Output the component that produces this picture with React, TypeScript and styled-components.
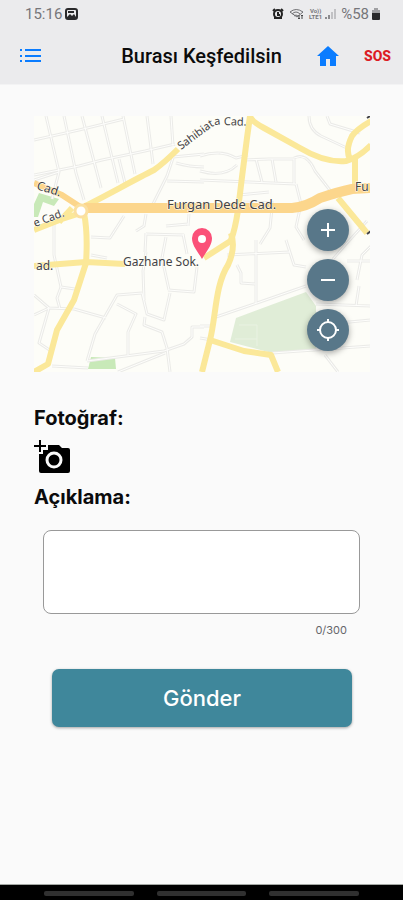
import React, { useState } from "react";
import styled, { createGlobalStyle } from "styled-components";

const GlobalStyle = createGlobalStyle`
  *, *::before, *::after { box-sizing: border-box; }
  body { margin: 0; background: #fafafa; }
  button, textarea { font: inherit; color: inherit; }
`;

const Screen = styled.div`
  min-height: 100vh;
  display: flex;
  flex-direction: column;
  background: #fafafa;
  color: #0b0b0c;
  font-family: Roboto, sans-serif;
`;

const TopArea = styled.div`
  background: #ebebed;
  border-bottom: 1px solid #f3f3f4;
`;

const StatusBar = styled.div`
  display: flex;
  align-items: center;
  justify-content: space-between;
  height: 28px;
  padding: 0 23px 0 25px;
  color: #76767a;
  font-size: 15px;
  line-height: 28px;
`;

const StatusGroup = styled.div`
  display: flex;
  align-items: center;
  gap: 3px;
`;

const Carrier = styled.span`
  display: flex;
  flex-direction: column;
  font-size: 6px;
  font-weight: 700;
  line-height: 6px;
  text-align: center;
`;

const Toolbar = styled.header`
  display: grid;
  grid-template-columns: 78px 1fr 84px;
  align-items: center;
  height: 56px;
  padding: 0 12px 0 18px;
`;

const Title = styled.h1`
  margin: 0;
  font-size: 20px;
  font-weight: 500;
  line-height: 24px;
  text-align: center;
  white-space: nowrap;
`;

const Actions = styled.div`
  display: flex;
  align-items: center;
  justify-content: flex-end;
  gap: 24px;
`;

const IconButton = styled.button`
  display: flex;
  align-items: center;
  justify-self: start;
  padding: 0;
  border: 0;
  background: none;
  color: #0a7cff;
  cursor: pointer;
`;

const SosButton = styled(IconButton)`
  color: #dc1c24;
  font-family: Roboto, sans-serif;
  font-size: 14px;
  font-weight: 800;
  line-height: 24px;
`;

const Content = styled.main`
  flex: 1;
  padding: 31px 33px 24px 34px;
`;

const MapFrame = styled.section`
  position: relative;
  height: 256px;
  overflow: hidden;
  background: #fdfdf8;
`;

const MapDrawing = styled.svg`
  display: block;
  width: 100%;
  height: 100%;
`;

const MapControls = styled.div`
  position: absolute;
  right: 21px;
  bottom: 21px;
  display: flex;
  flex-direction: column;
  gap: 8px;
`;

const MapButton = styled.button`
  display: flex;
  align-items: center;
  justify-content: center;
  width: 42px;
  height: 42px;
  padding: 0;
  border: 0;
  border-radius: 50%;
  background: #587789;
  color: #fff;
  box-shadow: 0 2px 6px rgba(0, 0, 0, 0.35);
  cursor: pointer;
`;

const Form = styled.form`
  display: flex;
  flex-direction: column;
  align-items: flex-start;
  padding-top: 32px;
  font-family: Inter, sans-serif;
`;

const FieldLabel = styled.label`
  font-size: 20px;
  font-weight: 700;
  line-height: 28px;
`;

const PhotoButton = styled(IconButton)`
  height: 51px;
  padding-bottom: 2px;
  color: #000;
`;

const Field = styled.div`
  align-self: stretch;
  display: flex;
  flex-direction: column;
  padding: 19px 10px 0 9px;
`;

const Description = styled.textarea`
  display: block;
  width: 100%;
  height: 84px;
  padding: 10px 12px;
  border: 1px solid #999;
  border-radius: 8px;
  background: #fff;
  font-size: 16px;
  line-height: 20px;
  resize: none;
`;

const Counter = styled.output`
  align-self: flex-end;
  padding: 8px 13px 0 0;
  color: #66666a;
  font-size: 11px;
  line-height: 16px;
`;

const SubmitButton = styled.button`
  align-self: stretch;
  height: 58px;
  margin: 31px 18px 0;
  border: 0;
  border-radius: 7px;
  background: #3f879b;
  color: #fff;
  font-size: 22px;
  font-weight: 500;
  box-shadow: 0 1px 3px rgba(0, 0, 0, 0.35);
  cursor: pointer;
`;

const NavBar = styled.footer`
  display: flex;
  justify-content: center;
  gap: 23px;
  height: 16px;
  padding: 6px 44px 0;
  border-top: 1px solid #a4a8a4;
  background: #000;
`;

const NavHandle = styled.span`
  flex: 1;
  max-width: 90px;
  height: 5px;
  border-radius: 2px;
  background: #303030;
`;

const minorRoads = [
  "M12 0L25 56M30 0L42 57 50 84M48 0L67 72M68 0L84 67M89 0L101 58M113 0L119 48M137 0L139 30",
  "M0 24L45 14 90 3M0 59L45 50 68 44 111 35 141 28M18 83L25 56 0 64M85 43L92 71",
  "M142 33L133 60 119 88M139 41L170 38M133 65L170 66M142 47Q155 51 170 51",
  "M166 40Q187 33 202 42L214 39M166 55Q190 62 203 49M166 64L262 68M210 44L235 43 260 43V68M222 43L228 66M238 43L242 66",
  "M260 42Q273 36 281 55L302 82M275 0Q275 14 287 20L315 33M293 0L296 8 326 17",
  "M262 68L267 88 262 111 270 124M205 79L235 76M209 86L240 87M238 92L236 112 226 128",
  "M20 101V139L27 171M57 121L76 122 90 100M57 139L73 142M102 115L110 110 112 98M112 117L111 136M112 118L150 119M132 110L154 108M155 98L154 110",
  "M27 171L23 182 26 193M27 171L41 173M112 136L109 155 110 184M132 121L128 142 135 174M149 118L153 138",
  "M53 245L61 218 83 179 108 177M40 193L72 202M0 199L15 192 40 193M0 179L15 192 5 227 17 235",
  "M108 177L113 198 130 204 136 177M83 188L102 198 94 216V239M111 201L110 209 128 216 133 232 136 256",
  "M53 245L130 235 150 228 158 221 158 211 170 211M84 256L131 237",
  "M18 250L54 252M134 174L160 176 163 151",
  "M203 149L207 157V167L221 168M222 124V187M193 139L256 136M182 201L223 187 272 170",
  "M252 124L260 149 272 151M299 143L313 127 333 105M313 145L337 145M323 164L328 139 337 130",
  "M282 188L337 190M322 190L325 170M305 207L337 204M238 237L337 230M291 239L304 256M166 210L179 210M166 222L178 224",
];

const yellowRoads = [
  "M49 91C68 82 96 66 120 54Q130 47 144 33",
  "M216 0Q217 5 230 12L266 32Q291 47 312 45 324 42 337 29",
  "M216 0L213 22 208 61 204 94Q201 114 197 124",
  "M197 117Q202 132 194 149C181 169 182 201 176 224L168 256",
  "M198 124L170 142",
  "M337 5Q323 13 318 20 311 34 316 43",
  "M321 43V74M304 82L333 117",
  "M176 224L210 235 237 239 244 256",
  "M0 114L28 103 50 96M25 106L38 92",
  "M50 97Q54 117 52 147L40 184 23 214 14 248 0 256",
  "M0 150L52 146 91 148",
];

const StreetMap = () => (
  <MapDrawing viewBox="0 0 336 256" preserveAspectRatio="xMidYMid slice" role="img" aria-label="Harita">
    <path fill="#e0edd7" d="M202 202L272 176 282 190V235L238 237 196 226Z" />
    <path fill="none" stroke="#e9f2e2" d="M205 209H223V230M201 223H223" />
    <path fill="#c8e9b8" d="M57 241L81 242 82 253 54 253ZM5 77L25 83 20 90 9 86 4 101H0V88Z" />
    <g fill="none" stroke="#ebebe8" strokeWidth="3" strokeLinejoin="round">
      {minorRoads.map((d) => <path key={d} d={d} />)}
    </g>
    <g fill="none" stroke="#fefefc" strokeWidth="1" strokeLinejoin="round">
      {minorRoads.map((d) => <path key={d} d={d} />)}
    </g>
    <g fill="none" stroke="#fbe899" strokeWidth="6" strokeLinejoin="round">
      {yellowRoads.map((d) => <path key={d} d={d} />)}
    </g>
    <g fill="none" stroke="#fcd68c" strokeLinejoin="round">
      <path strokeWidth="10" d="M50 92H258Q272 91 286 82 304 76 318 73L336 72" />
      <path strokeWidth="6" d="M0 67L28 79 48 92" />
    </g>
    <circle cx="47" cy="95" r="6" fill="#fff" stroke="#fbe0a0" strokeWidth="3" />
    <defs>
      <path id="street-north" d="M147 34L178 11Q182 8 190 9L224 10" />
      <path id="street-west" d="M2 73L40 85" />
      <path id="street-southwest" d="M1 111L42 96" />
    </defs>
    <g
      fill="#424246"
      stroke="#fffef5"
      strokeWidth="1"
      paintOrder="stroke"
      fontFamily="Noto Sans, sans-serif"
      fontSize="12"
    >
      <text fontSize="11"><textPath href="#street-north">Sahibiata Cad.</textPath></text>
      <text><textPath href="#street-west">Cad.</textPath></text>
      <text fontSize="11"><textPath href="#street-southwest">e Cad.</textPath></text>
      <text x="133" y="93" fontSize="13">Furgan Dede Cad.</text>
      <text x="89" y="150">Gazhane Sok.</text>
      <text x="2" y="154">ad.</text>
      <text x="321" y="75">Fu</text>
    </g>
    <path d="M336 0L333 2M337 115L333 118" stroke="#424246" strokeWidth="2" />
    <path fill="#fb5078" d="M168 143C162 133 158 129 158 122A10 10 0 1 1 178 122C178 129 174 133 168 143Z" />
    <circle cx="168" cy="123" r="4" fill="#fff" />
  </MapDrawing>
);

const StatusIcons = () => (
  <>
    <svg width="12" height="12" viewBox="0 0 12 12" aria-hidden="true">
      <path d="M1 3L3 1M9 1L11 3" stroke="#222" strokeWidth="2" />
      <circle cx="6" cy="6" r="4" fill="none" stroke="#222" strokeWidth="2" />
      <path d="M2 10H10M6 4V7H8" fill="none" stroke="#222" strokeWidth="2" />
    </svg>
    <svg width="19" height="12" viewBox="0 0 19 12" fill="none" stroke="#707073" aria-hidden="true">
      <path d="M3 4Q9 -1 16 4L10 9ZM5 6Q9 2 13 6M7 8Q9 6 11 8" />
      <path d="M12 7V11M11 10L12 11 13 10M15 11V7M14 8L15 7 16 8" stroke="#444" />
    </svg>
    <Carrier><span>Vo))</span><span>LTE1</span></Carrier>
    <svg width="13" height="10" viewBox="0 0 13 10" aria-hidden="true">
      <path fill="#8b8b8e" d="M0 8H2V10H0ZM3 6H5V10H3Z" />
      <path fill="#c1c1c4" d="M6 3H8V10H6ZM9 0H11V10H9Z" />
    </svg>
  </>
);

const ListIcon = () => (
  <svg width="24" height="14" viewBox="0 0 24 14" aria-hidden="true">
    <path fill="currentColor" d="M2 0H4V2H2ZM2 6H4V8H2ZM2 11H4V13H2ZM7 0H23V2H7ZM7 6H23V8H7ZM7 11H23V13H7Z" />
  </svg>
);

const CameraIcon = () => (
  <svg width="37" height="34" viewBox="0 0 37 34" aria-hidden="true">
    <path
      fill="currentColor"
      d="M5 0H7V5H12V7H7V12H5V7H0V5H5ZM14 8V5H25L28 8H34Q36 8 36 10V31Q36 33 34 33H7Q5 33 5 31V14H9V10H14Z"
    />
    <circle cx="20" cy="20" r="7" fill="none" stroke="#fafafa" strokeWidth="3" />
  </svg>
);

const MAX_LENGTH = 300;

export default function App() {
  const [text, setText] = useState("");

  return (
    <Screen>
      <GlobalStyle />
      <TopArea>
        <StatusBar>
          <StatusGroup>
            <span>15:16</span>
            <svg width="13" height="12" viewBox="0 0 13 12" aria-hidden="true">
              <rect x="1" y="1" width="11" height="10" rx="2" fill="none" stroke="#29292b" strokeWidth="2" />
              <path fill="#29292b" d="M2 9L5 6 7 8 9 6 11 9V11H2ZM3 3H9V5H3Z" />
            </svg>
          </StatusGroup>
          <StatusGroup>
            <StatusIcons />
            <span>%58</span>
            <svg width="8" height="12" viewBox="0 0 8 12" aria-hidden="true">
              <path fill="#a0a0a3" d="M2 0H6V2H8V6H0V2H2Z" />
              <path fill="#29292b" d="M0 5H8V11Q8 12 7 12H1Q0 12 0 11Z" />
            </svg>
          </StatusGroup>
        </StatusBar>
        <Toolbar>
          <IconButton type="button" aria-label="Menü"><ListIcon /></IconButton>
          <Title>Burası Keşfedilsin</Title>
          <Actions>
            <IconButton type="button" aria-label="Ana sayfa">
              <svg width="24" height="22" viewBox="0 0 24 22" aria-hidden="true">
                <path fill="currentColor" d="M12 1L23 11H20V21H14V14H10V21H4V11H1Z" />
              </svg>
            </IconButton>
            <SosButton type="button">SOS</SosButton>
          </Actions>
        </Toolbar>
      </TopArea>

      <Content>
        <MapFrame>
          <StreetMap />
          <MapControls>
            <MapButton type="button" aria-label="Yakınlaştır">
              <svg width="16" height="16" viewBox="0 0 16 16"><path d="M8 1V15M1 8H15" stroke="currentColor" strokeWidth="2" /></svg>
            </MapButton>
            <MapButton type="button" aria-label="Uzaklaştır">
              <svg width="16" height="16" viewBox="0 0 16 16"><path d="M1 8H15" stroke="currentColor" strokeWidth="2" /></svg>
            </MapButton>
            <MapButton type="button" aria-label="Konumum">
              <svg width="24" height="24" viewBox="0 0 24 24" fill="none" stroke="currentColor" strokeWidth="2">
                <circle cx="12" cy="12" r="8" />
                <path d="M12 1V5M12 19V23M1 12H5M19 12H23" />
              </svg>
            </MapButton>
          </MapControls>
        </MapFrame>

        <Form onSubmit={(event) => event.preventDefault()}>
          <FieldLabel htmlFor="photo">Fotoğraf:</FieldLabel>
          <PhotoButton id="photo" type="button"><CameraIcon /></PhotoButton>
          <FieldLabel htmlFor="description">Açıklama:</FieldLabel>
          <Field>
            <Description
              id="description"
              maxLength={MAX_LENGTH}
              value={text}
              onChange={(event) => setText(event.target.value)}
            />
            <Counter htmlFor="description">{text.length}/{MAX_LENGTH}</Counter>
          </Field>
          <SubmitButton type="submit">Gönder</SubmitButton>
        </Form>
      </Content>

      <NavBar><NavHandle /><NavHandle /><NavHandle /></NavBar>
    </Screen>
  );
}
